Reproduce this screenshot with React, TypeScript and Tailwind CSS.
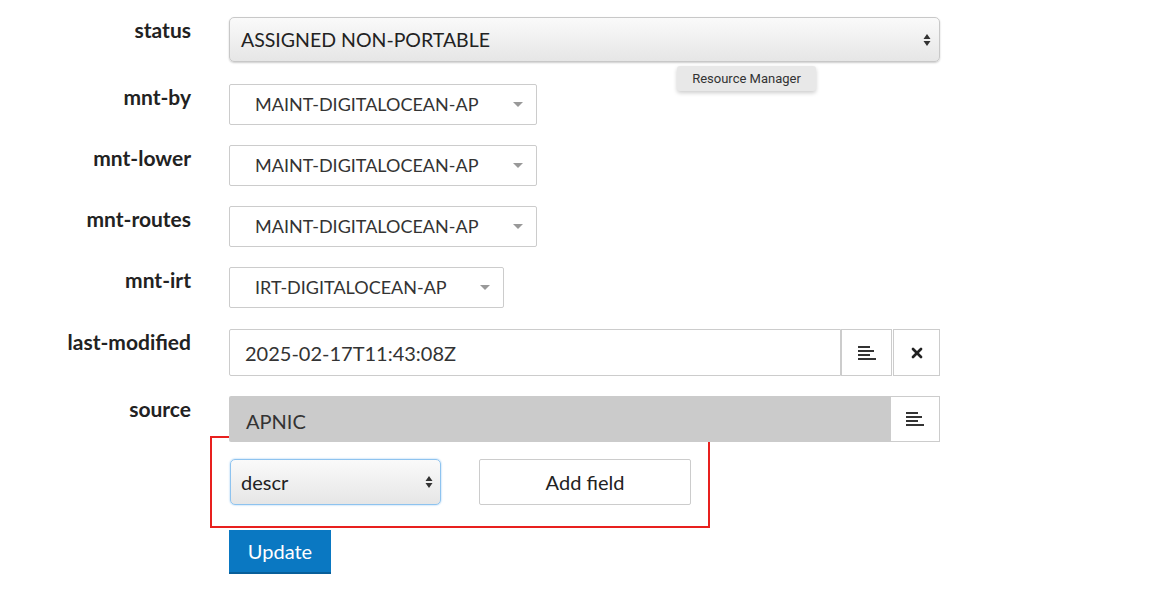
import { X } from "lucide-react";

const font = { fontFamily: "Lato, 'Open Sans', sans-serif" };

function Lines() {
  return (
    <svg width="18" height="14" viewBox="0 0 18 14">
      <rect x="0" y="0" width="12" height="2" fill="#333" />
      <rect x="0" y="4" width="16" height="2" fill="#333" />
      <rect x="0" y="8" width="12" height="2" fill="#333" />
      <rect x="0" y="12" width="18" height="2" fill="#333" />
    </svg>
  );
}

function Updown() {
  return (
    <svg width="8" height="16" viewBox="0 0 8 16">
      <path d="M4 2 L7.5 7 L0.5 7 Z M4 14 L7.5 9 L0.5 9 Z" fill="#333" />
    </svg>
  );
}

function Row({ label, top, children }: { label: string; top: string; children: React.ReactNode }) {
  return (
    <div className={`flex ${top}`}>
      <div className="w-[191px] shrink-0 text-right text-[21px] leading-[26px] font-bold text-[#222] pt-[0px]">{label}</div>
      <div className="ml-[38px] flex-1">{children}</div>
    </div>
  );
}

function Maint({ name, w }: { name: string; w: string }) {
  return (
    <div className={`${w} h-[41px] border border-[#ccc] rounded-[2px] bg-white flex items-center justify-between pl-[25px] pr-[13px] text-[18px] text-[#333]`}>
      <span>{name}</span>
      <span className="w-0 h-0 border-l-[5px] border-r-[5px] border-t-[5px] border-l-transparent border-r-transparent border-t-[#999]" />
    </div>
  );
}

export default function App() {
  return (
    <div className="w-[1150px] h-[594px] bg-white relative overflow-hidden" style={font}>
      <div className="w-[940px] pt-[4px]">
        <Row label="status" top="mt-[13px]">
          <div className="h-[45px] rounded-[5px] border border-[#c8c8c8] shadow-[0_1px_2px_rgba(0,0,0,0.2)] bg-gradient-to-b from-[#fafafa] to-[#e6e6e6] flex items-center justify-between pl-[11px] pr-[8px] text-[19.5px] text-[#222]">
            <span>ASSIGNED NON-PORTABLE</span>
            <Updown />
          </div>
        </Row>
        <Row label="mnt-by" top="mt-[22px]">
          <Maint name="MAINT-DIGITALOCEAN-AP" w="w-[308px]" />
        </Row>
        <Row label="mnt-lower" top="mt-[20px]">
          <Maint name="MAINT-DIGITALOCEAN-AP" w="w-[308px]" />
        </Row>
        <Row label="mnt-routes" top="mt-[20px]">
          <Maint name="MAINT-DIGITALOCEAN-AP" w="w-[308px]" />
        </Row>
        <Row label="mnt-irt" top="mt-[20px]">
          <Maint name="IRT-DIGITALOCEAN-AP" w="w-[275px]" />
        </Row>
        <Row label="last-modified" top="mt-[21px]">
          <div className="flex h-[47px]">
            <div className="flex-1 border border-[#ccc] rounded-l-[2px] flex items-center pl-[15px] text-[20px] text-[#333]">
              2025-02-17T11:43:08Z
            </div>
            <div className="w-[51px] border border-[#ccc] flex items-center justify-center"><Lines /></div>
            <div className="w-[47px] border border-[#ccc] ml-[1px] flex items-center justify-center"><X size={16} strokeWidth={4} color="#222" /></div>
          </div>
        </Row>
        <Row label="source" top="mt-[20px]">
          <div className="flex h-[46px]">
            <div className="flex-1 bg-[#cbcbcb] rounded-l-[2px] flex items-center pl-[17px] pt-[3px] text-[20px] text-[#333]">APNIC</div>
            <div className="w-[50px] border border-[#ccc] flex items-center justify-center"><Lines /></div>
          </div>
        </Row>
        <div className="ml-[210px] mt-[-6px] w-[500px] h-[92px] border-2 border-[#e8201e] flex items-center pl-[18px] gap-[38px]">
          <div className="w-[211px] h-[46px] rounded-[5px] border border-[#8ec3ef] shadow-[0_0_2px_#8ec3ef] bg-gradient-to-b from-[#fafafa] to-[#e6e6e6] flex items-center justify-between pl-[10px] pr-[7px] text-[20px] text-[#222]">
            <span>descr</span>
            <Updown />
          </div>
          <div className="w-[212px] h-[46px] border border-[#ccc] rounded-[2px] flex items-center justify-center text-[20px] text-[#222]">Add field</div>
        </div>
        <div className="ml-[229px] mt-[2px] w-[102px] h-[44px] bg-[#0a78c2] text-white text-[20px] flex items-center justify-center border-b-2 border-[#085f9a]">Update</div>
      </div>
      <div className="absolute left-[677px] top-[66px] w-[139px] h-[25px] bg-[#e8e8e8] rounded-[3px] shadow-[0_2px_4px_rgba(0,0,0,0.2)] text-[13px] text-[#333] flex items-center justify-center" style={{ fontFamily: "Roboto, sans-serif" }}>
        Resource Manager
      </div>
    </div>
  );
}
